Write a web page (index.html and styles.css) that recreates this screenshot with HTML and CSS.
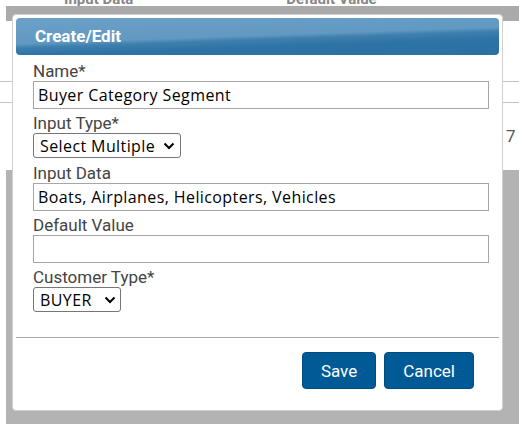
FILE: index.html
```html
<!DOCTYPE html>
<html lang="en">

<head>
    <meta charset="UTF-8">
    <meta name="viewport" content="width=device-width, initial-scale=1.0">
    <title>Create/Edit</title>
    <link rel="stylesheet" href="styles.css">
</head>

<body>
    <!-- page behind the dialog -->
    <div class="page">
        <div class="page-head">
            <span class="col col-a">Input Data</span>
            <span class="col col-b">Default Value</span>
        </div>
        <div class="page-band"></div>
        <div class="page-rows">
            <div class="row row-first"></div>
            <div class="row row-second"></div>
            <div class="row row-third"><span class="cellnum">7</span></div>
        </div>
        <div class="page-shade"></div>
    </div>

    <div class="dialog">
        <div class="dialog-title">Create/Edit</div>
        <form class="dialog-form">
            <label class="label" for="name">Name*</label>
            <input class="field" id="name" type="text" value="Buyer Category Segment">

            <label class="label" for="inputtype">Input Type*</label>
            <div class="select">
                <select id="inputtype">
                    <option>Select Multiple</option>
                </select>
                <svg class="chev" width="12" height="8" viewBox="0 0 12 8">
                    <path d="M1.5 1.5 L6 6 L10.5 1.5" fill="none" stroke="#000" stroke-width="2" />
                </svg>
            </div>

            <label class="label" for="inputdata">Input Data</label>
            <input class="field" id="inputdata" type="text" value="Boats, Airplanes, Helicopters, Vehicles">

            <label class="label" for="defaultvalue">Default Value</label>
            <input class="field" id="defaultvalue" type="text" value="">

            <label class="label" for="customertype">Customer Type*</label>
            <div class="select select-last">
                <select id="customertype">
                    <option>BUYER</option>
                </select>
                <svg class="chev" width="12" height="8" viewBox="0 0 12 8">
                    <path d="M1.5 1.5 L6 6 L10.5 1.5" fill="none" stroke="#000" stroke-width="2" />
                </svg>
            </div>
        </form>
        <hr class="divider">
        <div class="actions">
            <button class="btn" type="button">Save</button>
            <button class="btn" type="button">Cancel</button>
        </div>
    </div>
</body>

</html>
```

FILE: styles.css
```css
body {
    margin: 0;
    background-color: #fff;
    font-family: Roboto, "Liberation Sans", sans-serif;
    position: relative;
    height: 427px;
    overflow: hidden;
}

/* background page */
.page-head {
    height: 6px;
    overflow: hidden;
    display: flex;
}

.col {
    margin-top: -11px;
    line-height: 20px;
    font-size: 15px;
    font-weight: bold;
    color: #888;
    white-space: nowrap;
}

.col-a {
    margin-left: 64px;
}

.col-b {
    margin-left: 153px;
}

.page-band {
    margin-left: 6px;
    height: 15px;
    background-color: #aaa;
}

.page-rows {
    height: 149px;
    background-color: #fff;
}

.row {
    border-bottom: 1px solid #c4c4c4;
}

.row-first {
    height: 60px;
}

.row-second {
    height: 20px;
}

.row-third {
    border-bottom: 0px;
    padding-top: 23px;
    padding-left: 506px;
    line-height: 20px;
    font-size: 17px;
    color: #555;
}

.page-shade {
    margin-left: 6px;
    height: 254px;
    background-color: #b3b3b3;
}

/* dialog */
.dialog {
    position: absolute;
    left: 12px;
    top: 14px;
    width: 491px;
    height: 397px;
    box-sizing: border-box;
    background-color: #fff;
    border: 1px solid #d0d0d0;
    border-radius: 4px;
    padding: 3px;
}

.dialog-title {
    height: 37px;
    line-height: 37px;
    padding-left: 19px;
    border-radius: 4px;
    color: #fff;
    font-size: 17px;
    font-weight: bold;
    background: linear-gradient(178deg, #6ca0c8 0%, #6199c2 48%, #3e7fae 56%, #2d73a5 70%, #2a70a2 100%);
}

.dialog-form {
    padding: 6px 13px 0px 17px;
}

.label {
    display: block;
    line-height: 20px;
    font-size: 17px;
    color: #444;
}

.field {
    display: block;
    width: 456px;
    height: 28px;
    box-sizing: border-box;
    margin: 0px 0px 4px 0px;
    padding: 0px 4px;
    border: 1px solid #a6a6a6;
    font-family: "Open Sans", sans-serif;
    font-size: 16px;
    letter-spacing: 0.4px;
    color: #000;
}

.select {
    display: flex;
    align-items: center;
    width: fit-content;
    height: 25px;
    box-sizing: border-box;
    margin-bottom: 5px;
    padding: 0px 5px 0px 6px;
    border: 1px solid #767676;
    border-radius: 3px;
    gap: 7px;
}

.select select {
    appearance: none;
    -webkit-appearance: none;
    border: 0px;
    background: transparent;
    padding: 0px;
    margin: 0px;
    font-family: "Open Sans", sans-serif;
    font-size: 16px;
    letter-spacing: 0.4px;
    color: #000;
    outline: none;
}

.select-last {
    gap: 12px;
    padding-right: 4px;
}

.chev {
    display: block;
}

.divider {
    margin: 25px 0px 0px 0px;
    border: 0px;
    border-top: 1px solid #aaa;
}

.actions {
    display: flex;
    justify-content: flex-end;
    gap: 8px;
    margin-top: 14px;
    padding-right: 25px;
}

.btn {
    height: 37px;
    padding: 0px 18px;
    background-color: #005a96;
    border: 1px solid #004c80;
    border-radius: 4px;
    color: #fff;
    font-family: Roboto, "Liberation Sans", sans-serif;
    font-size: 17px;
}

.btn:hover {
    cursor: pointer;
}
```
